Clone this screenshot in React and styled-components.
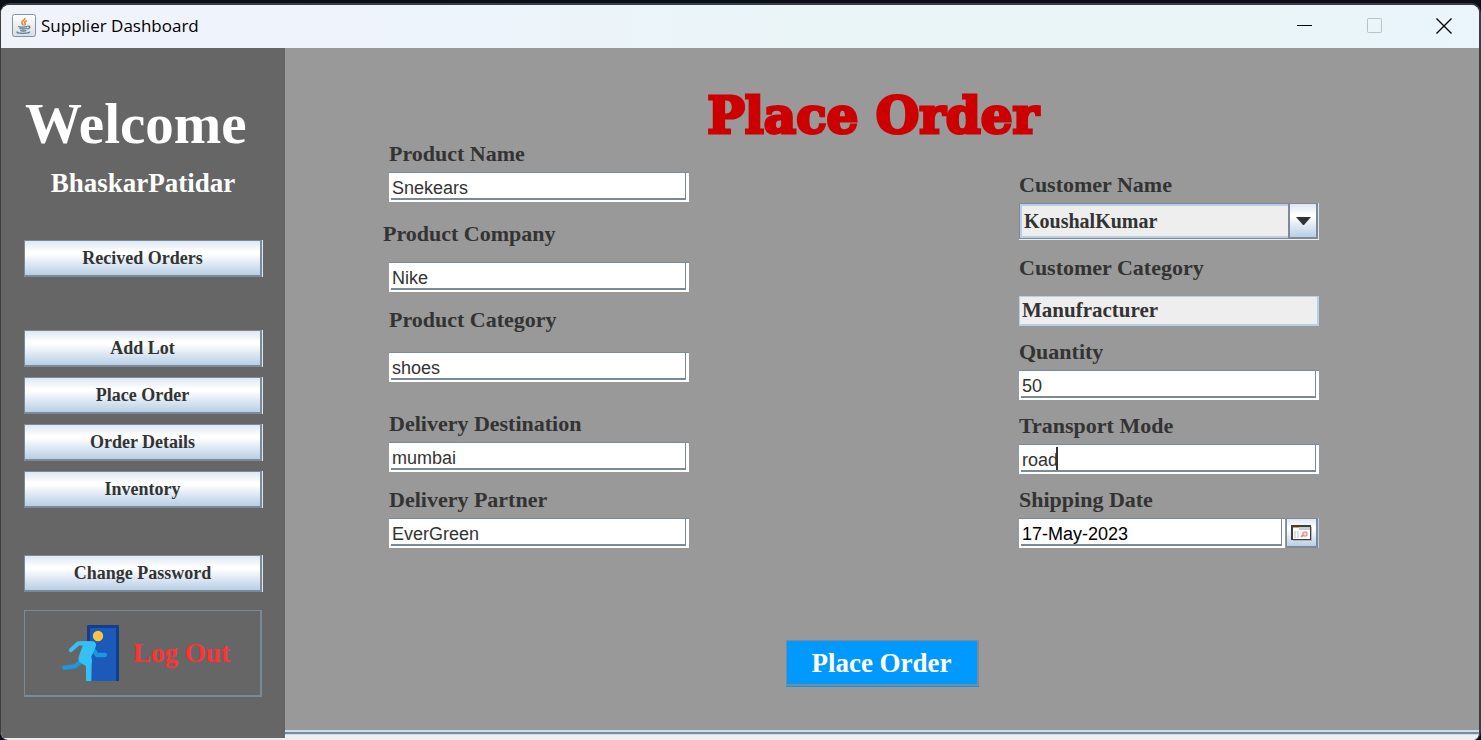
import React from "react";
import styled, { createGlobalStyle, css } from "styled-components";

const steel = "#7a8a99";
const serif = `"Baskerville Old Face", "Liberation Serif", serif`;
const sans = `"Liberation Sans", Arial, sans-serif`;
const metal = "linear-gradient(#dde8f3 0%, #ffffff 32%, #ffffff 38%, #dce7f3 68%, #b8cfe5 100%)";

const GlobalStyle = createGlobalStyle`
  * { box-sizing: border-box; }
  body { margin: 0; background: #0b0f19; }
  button, input, select { margin: 0; border-radius: 0; outline: none; }
`;

const Desktop = styled.div`
  min-height: 100vh;
  padding: 3px 0 0;
  display: flex;
`;

const Window = styled.div`
  flex: 1;
  display: flex;
  flex-direction: column;
  border: solid #3b3d42;
  border-width: 2px 2px 0 1px;
  border-radius: 10px 10px 8px 8px;
  background: #eeeeee;
  overflow: hidden;
`;

const TitleBar = styled.header`
  height: 43px;
  display: flex;
  align-items: center;
  padding: 0 0 2px 11px;
  background: linear-gradient(90deg, #f0f3fa 0%, #eff3fc 18%, #eaf5f8 55%, #e9f5f7 85%, #eaf5fc 100%);
`;

const WindowTitle = styled.span`
  flex: 1;
  padding-left: 5px;
  font: 17px/24px "Segoe UI", "Open Sans", sans-serif;
  color: #000;
`;

const WindowControl = styled.button`
  width: 70px;
  height: 41px;
  padding: 0;
  border: 0;
  background: transparent;
  display: flex;
  align-items: center;
  justify-content: center;
`;

const Body = styled.div`
  flex: 1;
  display: flex;
`;

const Sidebar = styled.nav`
  width: 284px;
  flex: none;
  margin-bottom: 2px;
  padding: 44px 23px 40px;
  background: #666666;
  display: flex;
  flex-direction: column;
`;

const Welcome = styled.h2`
  margin: 0;
  padding-left: 1px;
  font: bold 57px/64px ${serif};
  color: #fff;
`;

const UserName = styled.p`
  margin: 11px 0 41px;
  font: bold 27px/32px ${serif};
  text-align: center;
  color: #fff;
`;

const NavGroup = styled.div`
  display: flex;
  flex-direction: column;
  gap: 10px;
  margin-bottom: ${(p) => p.$after}px;
`;

const bevel = css`
  border: solid ${steel};
  border-width: 1px 2px 2px 1px;
`;

const NavButton = styled.button`
  ${bevel}
  height: 37px;
  padding: 0;
  background: ${metal};
  box-shadow: 1px 0 0 #dbe7f3;
  font: bold 18px/24px ${serif};
  color: #333;
`;

const LogoutButton = styled.button`
  ${bevel}
  height: 87px;
  padding: 0;
  display: flex;
  align-items: center;
  justify-content: center;
  gap: 14px;
  background: transparent;
  font: bold 27px/32px ${serif};
  color: #ff3333;
`;

const Content = styled.main`
  flex: 1;
  display: flex;
  flex-direction: column;
`;

const OrderForm = styled.form`
  flex: 1;
  display: flex;
  flex-direction: column;
  padding: 42px 0 43px;
  background: #999999;
`;

const Heading = styled.h1`
  margin: 0;
  padding-right: 18px;
  font: bold 50px/52px "Cooper Black", "DejaVu Serif", serif;
  -webkit-text-stroke: 3px #cc0000;
  text-align: center;
  color: #cc0000;
`;

const Columns = styled.div`
  display: flex;
  justify-content: space-between;
  padding: 0 160px 0 104px;
`;

const Column = styled.div`
  width: 300px;
  padding-top: ${(p) => p.$top || 0}px;
`;

const Field = styled.div`
  display: flex;
  flex-direction: column;
  gap: ${(p) => p.$gap || 6}px;
  margin-top: ${(p) => p.$before || 0}px;
`;

const Label = styled.label`
  font: bold 22px/24px ${serif};
  color: #333;
  margin-left: ${(p) => (p.$outdent ? -6 : 0)}px;
`;

const InputFrame = styled.div`
  position: relative;
  flex: 1;
  display: flex;
  height: 30px;
  padding: 0 3px 2px 2px;
  border-top: 1px solid ${steel};
  background: #fff;
`;

const TextInput = styled.input`
  width: 100%;
  min-width: 0;
  padding: 6px 0 0 1px;
  border: solid ${steel};
  border-width: 0 1px 2px 0;
  background: #fff;
  font: 18px/19px ${sans};
  color: ${(p) => (p.$dark ? "#000" : "#333")};
`;

const Caret = styled.span`
  position: absolute;
  left: 37px;
  top: 2px;
  width: 2px;
  height: 23px;
  background: #333;
`;

const ReadOnlyInput = styled.input`
  height: 30px;
  padding: 0 2px;
  border: solid #b8cfe5;
  border-width: 1px 2px 2px 1px;
  background: #eee;
  font: bold 21px/24px ${serif};
  color: #333;
`;

const SelectFrame = styled.div`
  position: relative;
  height: 37px;
  display: flex;
  border-bottom: 1px solid #eee;
`;

const Select = styled.select`
  flex: 1;
  appearance: none;
  padding: 0 32px 0 4px;
  border: 1px solid ${steel};
  box-shadow: inset 0 0 0 2px #b8cfe5;
  background: #eee;
  font: bold 20px/24px ${serif};
  color: #333;
`;

const SelectArrow = styled.span`
  ${bevel}
  position: absolute;
  top: 0;
  right: 1px;
  bottom: 0;
  width: 30px;
  border-left-width: 2px;
  display: flex;
  align-items: center;
  justify-content: center;
  background: ${metal};
  box-shadow: 1px 0 0 #dbe7f3;
  pointer-events: none;
`;

const DateRow = styled.div`
  display: flex;
  gap: 1px;
  padding-right: 1px;
`;

const CalendarButton = styled.button`
  ${bevel}
  width: 32px;
  height: 30px;
  padding: 0;
  display: flex;
  align-items: center;
  justify-content: center;
  background: ${metal};
  box-shadow: 1px 0 0 #b8cfe5;
`;

const SubmitButton = styled.button`
  ${bevel}
  align-self: center;
  width: 193px;
  height: 46px;
  margin-top: 92px;
  padding: 0;
  background: #0099ff;
  box-shadow: 0 1px 0 #0099ff;
  font: bold 27px/32px ${serif};
  color: #fff;
`;

const StatusStrip = styled.div`
  height: 10px;
  border-top: 2px solid #c8ddf2;
  background: linear-gradient(${steel} 0 2px, #c8ddf2 2px 3px, #eeeeee 3px);
`;

function JavaIcon() {
  return (
    <svg width="24" height="24" viewBox="0 0 24 24" fill="none" aria-hidden="true">
      <defs>
        <linearGradient id="tile" x1="0" y1="0" x2="0" y2="1">
          <stop offset="0" stopColor="#ffffff" />
          <stop offset="1" stopColor="#d9dcdf" />
        </linearGradient>
      </defs>
      <rect x="0.5" y="0.5" width="23" height="22" rx="2" fill="url(#tile)" stroke="#7d94a5" />
      <path d="M12.800 4c.7 2.500-4 3-3 5.200.4.900 1.300 1.300 1.500 2.200M14.800 6.800c-2.200 1-2.800 1.700-1.600 2.900.4.600 0 1.200-.7 1.700" stroke="#e8822c" strokeWidth="1.500" />
      <path d="M6.500 12c-.4 1.400 7 1.300 9 .4M15.800 12.200c3-.6 2.600 2.300-.4 2.800M7.500 14.300c1.500.9 6 .9 7.500 0M8.300 16.400c1.400.8 4.800.8 6.100 0M5.500 17.600c-1.700 1.300 1.500 1.800 5.300 1.800 3.800 0 7.500-.6 6.600-1.900" stroke="#5c7f97" strokeWidth="1.300" />
    </svg>
  );
}

function LogoutIcon() {
  return (
    <svg width="64" height="56" viewBox="168 258 192 168" aria-hidden="true">
      <path d="M264 426V262q0-4 4-4h88q4 0 4 4v164z" fill="#123f8c" />
      <path d="M273 267h78v159h-78z" fill="#1d59b8" />
      <circle cx="297" cy="291" r="15.500" fill="#fbc540" />
      <path d="M280 328l14 20h24M248 366l-20 16-32 4" fill="none" stroke="#1999e0" strokeWidth="13" strokeLinecap="round" strokeLinejoin="round" />
      <path d="M216 333l22-20h36" fill="none" stroke="#35c0f4" strokeWidth="13" strokeLinecap="round" strokeLinejoin="round" />
      <path d="M242 307h38q13 2 11 14l-14 32q4 12 1 24l-1 49h-16v-44l-20-14q-5-7-1-17l12-33z" fill="#35c0f4" />
    </svg>
  );
}

function CalendarIcon() {
  return (
    <svg width="21" height="16" viewBox="0 0 21 16" aria-hidden="true">
      <path d="M2 2h19v14H2z" fill="#b4b4b4" />
      <path d="M0 0h20v15H0z" fill="#3d3d3d" />
      <path d="M2 2h17v12H2z" fill="#fff" />
      <path d="M2 2h6v1H2z" fill="#e9a23a" />
      <path d="M8 2h11v3H8z" fill="#c8cdd2" />
      <path d="M3 6h2v7H3zM6 6h2v7H6z" fill="#dedede" />
      <path d="M10 12l2-2" stroke="#f08a8e" strokeWidth="2" />
      <rect x="12" y="7" width="4" height="4" rx="1" fill="#fde8e8" stroke="#ea6468" />
    </svg>
  );
}

function TextField({ id, label, value, gap, before, outdent, caret }) {
  return (
    <Field $gap={gap} $before={before}>
      <Label htmlFor={id} $outdent={outdent}>{label}</Label>
      <InputFrame>
        <TextInput id={id} defaultValue={value} />
        {caret && <Caret />}
      </InputFrame>
    </Field>
  );
}

export default function App() {
  return (
    <Desktop>
      <GlobalStyle />
      <Window>
        <TitleBar>
          <JavaIcon />
          <WindowTitle>Supplier Dashboard</WindowTitle>
          <WindowControl aria-label="Minimize">
            <svg width="15" height="15" shapeRendering="crispEdges"><path d="M0 7h15v1H0z" fill="#000" /></svg>
          </WindowControl>
          <WindowControl aria-label="Maximize" disabled>
            <svg width="15" height="15" fill="none"><rect x="0.500" y="0.500" width="14" height="14" rx="1" stroke="#b9c3c5" /></svg>
          </WindowControl>
          <WindowControl aria-label="Close">
            <svg width="16" height="16" fill="none"><path d="M.5.5l15 15M15.500.5l-15 15" stroke="#000" strokeWidth="1.400" /></svg>
          </WindowControl>
        </TitleBar>
        <Body>
          <Sidebar>
            <Welcome>Welcome</Welcome>
            <UserName>BhaskarPatidar</UserName>
            <NavGroup $after={53}>
              <NavButton>Recived Orders</NavButton>
            </NavGroup>
            <NavGroup $after={47}>
              <NavButton>Add Lot</NavButton>
              <NavButton>Place Order</NavButton>
              <NavButton>Order Details</NavButton>
              <NavButton>Inventory</NavButton>
            </NavGroup>
            <NavGroup $after={18}>
              <NavButton>Change Password</NavButton>
            </NavGroup>
            <LogoutButton>
              <LogoutIcon />
              Log Out
            </LogoutButton>
          </Sidebar>
          <Content>
            <OrderForm onSubmit={(e) => e.preventDefault()}>
              <Heading>Place Order</Heading>
              <Columns>
                <Column>
                  <TextField id="product-name" label="Product Name" value="Snekears" />
                  <TextField id="product-company" label="Product Company" value="Nike" before={20} gap={16} outdent />
                  <TextField id="product-category" label="Product Category" value="shoes" before={16} gap={20} />
                  <TextField id="destination" label="Delivery Destination" value="mumbai" before={30} />
                  <TextField id="partner" label="Delivery Partner" value="EverGreen" before={16} />
                </Column>
                <Column $top={31}>
                  <Field>
                    <Label htmlFor="customer-name">Customer Name</Label>
                    <SelectFrame>
                      <Select id="customer-name">
                        <option>KoushalKumar</option>
                      </Select>
                      <SelectArrow>
                        <svg width="15" height="8"><path d="M0 0h15L8 8H7z" fill="#333" /></svg>
                      </SelectArrow>
                    </SelectFrame>
                  </Field>
                  <Field $before={16} $gap={16}>
                    <Label htmlFor="customer-category">Customer Category</Label>
                    <ReadOnlyInput id="customer-category" value="Manufracturer" readOnly />
                  </Field>
                  <TextField id="quantity" label="Quantity" value="50" before={14} />
                  <TextField id="transport" label="Transport Mode" value="road" before={14} caret />
                  <Field $before={14}>
                    <Label htmlFor="shipping-date">Shipping Date</Label>
                    <DateRow>
                      <InputFrame>
                        <TextInput id="shipping-date" defaultValue="17-May-2023" $dark />
                      </InputFrame>
                      <CalendarButton type="button" aria-label="Choose date">
                        <CalendarIcon />
                      </CalendarButton>
                    </DateRow>
                  </Field>
                </Column>
              </Columns>
              <SubmitButton type="submit">Place Order</SubmitButton>
            </OrderForm>
            <StatusStrip />
          </Content>
        </Body>
      </Window>
    </Desktop>
  );
}
